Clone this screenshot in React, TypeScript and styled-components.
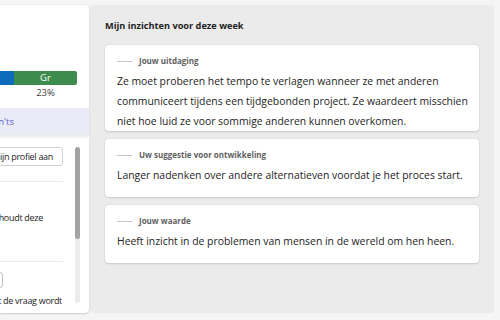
import React from "react";
import styled, { createGlobalStyle } from "styled-components";

const GlobalStyle = createGlobalStyle`
  html, body { margin: 0; padding: 0; }
  body {
    background: #f5f5f5;
    font-family: "Open Sans", "Noto Sans", "Liberation Sans", sans-serif;
    color: #242424;
  }
  * { box-sizing: border-box; }
`;

const Page = styled.div`
  display: flex;
  gap: 1px;
  width: 500px;
  height: 320px;
  padding: 5px 6px 7px 0;
`;

const LeftPanel = styled.aside`
  width: 89px;
  flex-shrink: 0;
  background: #ffffff;
  display: flex;
  flex-direction: column;
  overflow: hidden;
  border-radius: 0 4px 4px 0;
  box-shadow: 0 0 2px rgba(0, 0, 0, 0.12), 0 1px 2px rgba(0, 0, 0, 0.14);
  position: relative;
  z-index: 1;
`;

const Summary = styled.section`
  height: 103px;
  display: flex;
  flex-direction: column;
  justify-content: flex-end;
  padding: 0 12px 9px 0;
  gap: 1px;
`;

const Clip = styled.div<{ $w?: number }>`
  display: flex;
  justify-content: flex-end;
  overflow: hidden;
  width: ${(p) => (p.$w !== undefined ? `${p.$w}px` : "100%")};
  flex-shrink: 0;
  & > * { flex-shrink: 0; }
`;

const Bar = styled.div`
  display: flex;
  height: 14px;
  width: 140px;
`;

const Segment = styled.div<{ $color: string; $w: number; $last?: boolean }>`
  width: ${(p) => p.$w}px;
  background: ${(p) => p.$color};
  color: #ffffff;
  font-size: 9.5px;
  line-height: 14px;
  text-align: center;
  border-radius: ${(p) => (p.$last ? "0 2px 2px 0" : "0")};
`;

const Percent = styled.div`
  width: 63px;
  margin-left: auto;
  text-align: center;
  font-size: 9.5px;
  line-height: 13px;
  color: #424242;
`;

const Band = styled.div`
  height: 27px;
  flex-shrink: 0;
  background: #ebeaf7;
  display: flex;
  align-items: center;
  box-shadow: 0 2px 3px rgba(0, 0, 0, 0.1);
  position: relative;
`;

const BandText = styled.span`
  font-size: 9.5px;
  color: #5b5fc7;
  white-space: nowrap;
`;

const Lower = styled.div`
  flex: 1;
  display: flex;
  padding: 12px 9px 10px 0;
  gap: 12px;
  min-height: 0;
`;

const Column = styled.div`
  width: 63px;
  flex-shrink: 0;
  display: flex;
  flex-direction: column;
  align-items: flex-start;
`;

const GhostButton = styled.div`
  height: 19px;
  width: 120px;
  border: 1px solid #d1d1d1;
  border-radius: 3px;
  font-size: 9px;
  letter-spacing: -0.3px;
  line-height: 17px;
  text-align: right;
  padding-right: 9px;
  white-space: nowrap;
  color: #242424;
`;

const Divider = styled.div<{ $top: number }>`
  width: 63px;
  height: 1px;
  background: #ebebeb;
  margin-top: ${(p) => p.$top}px;
  flex-shrink: 0;
`;

const SideText = styled.span`
  font-size: 9px;
  letter-spacing: -0.3px;
  line-height: 14px;
  white-space: nowrap;
  color: #242424;
`;

const Spacer = styled.div<{ $h: number }>`
  height: ${(p) => p.$h}px;
  flex-shrink: 0;
`;

const InputBox = styled.div`
  width: 30px;
  height: 16px;
  border: 1px solid #c4c4c4;
  border-radius: 3px;
`;

const Scrollbar = styled.div`
  width: 5px;
  flex-shrink: 0;
  height: 156px;
  border-radius: 3px;
  background: #ececec;
  display: flex;
  flex-direction: column;
`;

const Thumb = styled.div`
  height: 92px;
  border-radius: 3px;
  background: #a3a3a3;
`;

const RightPanel = styled.main`
  flex: 1;
  background: #ebebeb;
  border-radius: 4px;
  padding: 13px 15px;
  display: flex;
  flex-direction: column;
`;

const Title = styled.h2`
  margin: 0 0 11px;
  font-size: 9.2px;
  line-height: 16px;
  font-weight: 700;
  color: #1f1f1f;
`;

const Cards = styled.div`
  display: flex;
  flex-direction: column;
  gap: 8px;
`;

const Card = styled.article<{ $pb: number }>`
  background: #ffffff;
  border-radius: 4px;
  padding: 10px 4px ${(p) => p.$pb}px 12px;
  box-shadow: 0 0 2px rgba(0, 0, 0, 0.1), 0 1px 2px rgba(0, 0, 0, 0.12);
`;

const LabelRow = styled.div`
  display: flex;
  align-items: center;
  gap: 7px;
  height: 12px;
`;

const Dash = styled.span`
  width: 15px;
  height: 1px;
  background: #c4c4c4;
`;

const Label = styled.span`
  font-size: 8px;
  font-weight: 700;
  color: #616161;
  line-height: 12px;
`;

const Body = styled.p`
  margin: 4px 0 0;
  font-size: 10.4px;
  line-height: 20px;
  color: #242424;
`;

const insights = [
  {
    label: "Jouw uitdaging",
    text: "Ze moet proberen het tempo te verlagen wanneer ze met anderen communiceert tijdens een tijdgebonden project. Ze waardeert misschien niet hoe luid ze voor sommige anderen kunnen overkomen.",
    pb: 0,
  },
  {
    label: "Uw suggestie voor ontwikkeling",
    text: "Langer nadenken over andere alternatieven voordat je het proces start.",
    pb: 12,
  },
  {
    label: "Jouw waarde",
    text: "Heeft inzicht in de problemen van mensen in de wereld om hen heen.",
    pb: 12,
  },
];

export default function App() {
  return (
    <>
      <GlobalStyle />
      <Page>
        <LeftPanel>
          <Summary>
            <Clip>
              <Bar>
                <Segment $color="#0f6cbd" $w={77} />
                <Segment $color="#3d8b4d" $w={63} $last>
                  Gr
                </Segment>
              </Bar>
            </Clip>
            <Percent>23%</Percent>
          </Summary>
          <Band>
            <Clip $w={14}>
              <BandText>Do's en don'ts</BandText>
            </Clip>
          </Band>
          <Lower>
            <Column>
              <Clip>
                <GhostButton>Bekijk mijn profiel aan</GhostButton>
              </Clip>
              <Divider $top={15} />
              <Spacer $h={29} />
              <Clip $w={43}>
                <SideText>Wie houdt deze</SideText>
              </Clip>
              <Divider $top={36} />
              <Spacer $h={10} />
              <Clip $w={3}>
                <InputBox />
              </Clip>
              <Spacer $h={6} />
              <Clip $w={62}>
                <SideText>Wanneer het de vraag wordt</SideText>
              </Clip>
            </Column>
            <Scrollbar>
              <Thumb />
            </Scrollbar>
          </Lower>
        </LeftPanel>
        <RightPanel>
          <Title>Mijn inzichten voor deze week</Title>
          <Cards>
            {insights.map((item) => (
              <Card key={item.label} $pb={item.pb}>
                <LabelRow>
                  <Dash />
                  <Label>{item.label}</Label>
                </LabelRow>
                <Body>{item.text}</Body>
              </Card>
            ))}
          </Cards>
        </RightPanel>
      </Page>
    </>
  );
}
